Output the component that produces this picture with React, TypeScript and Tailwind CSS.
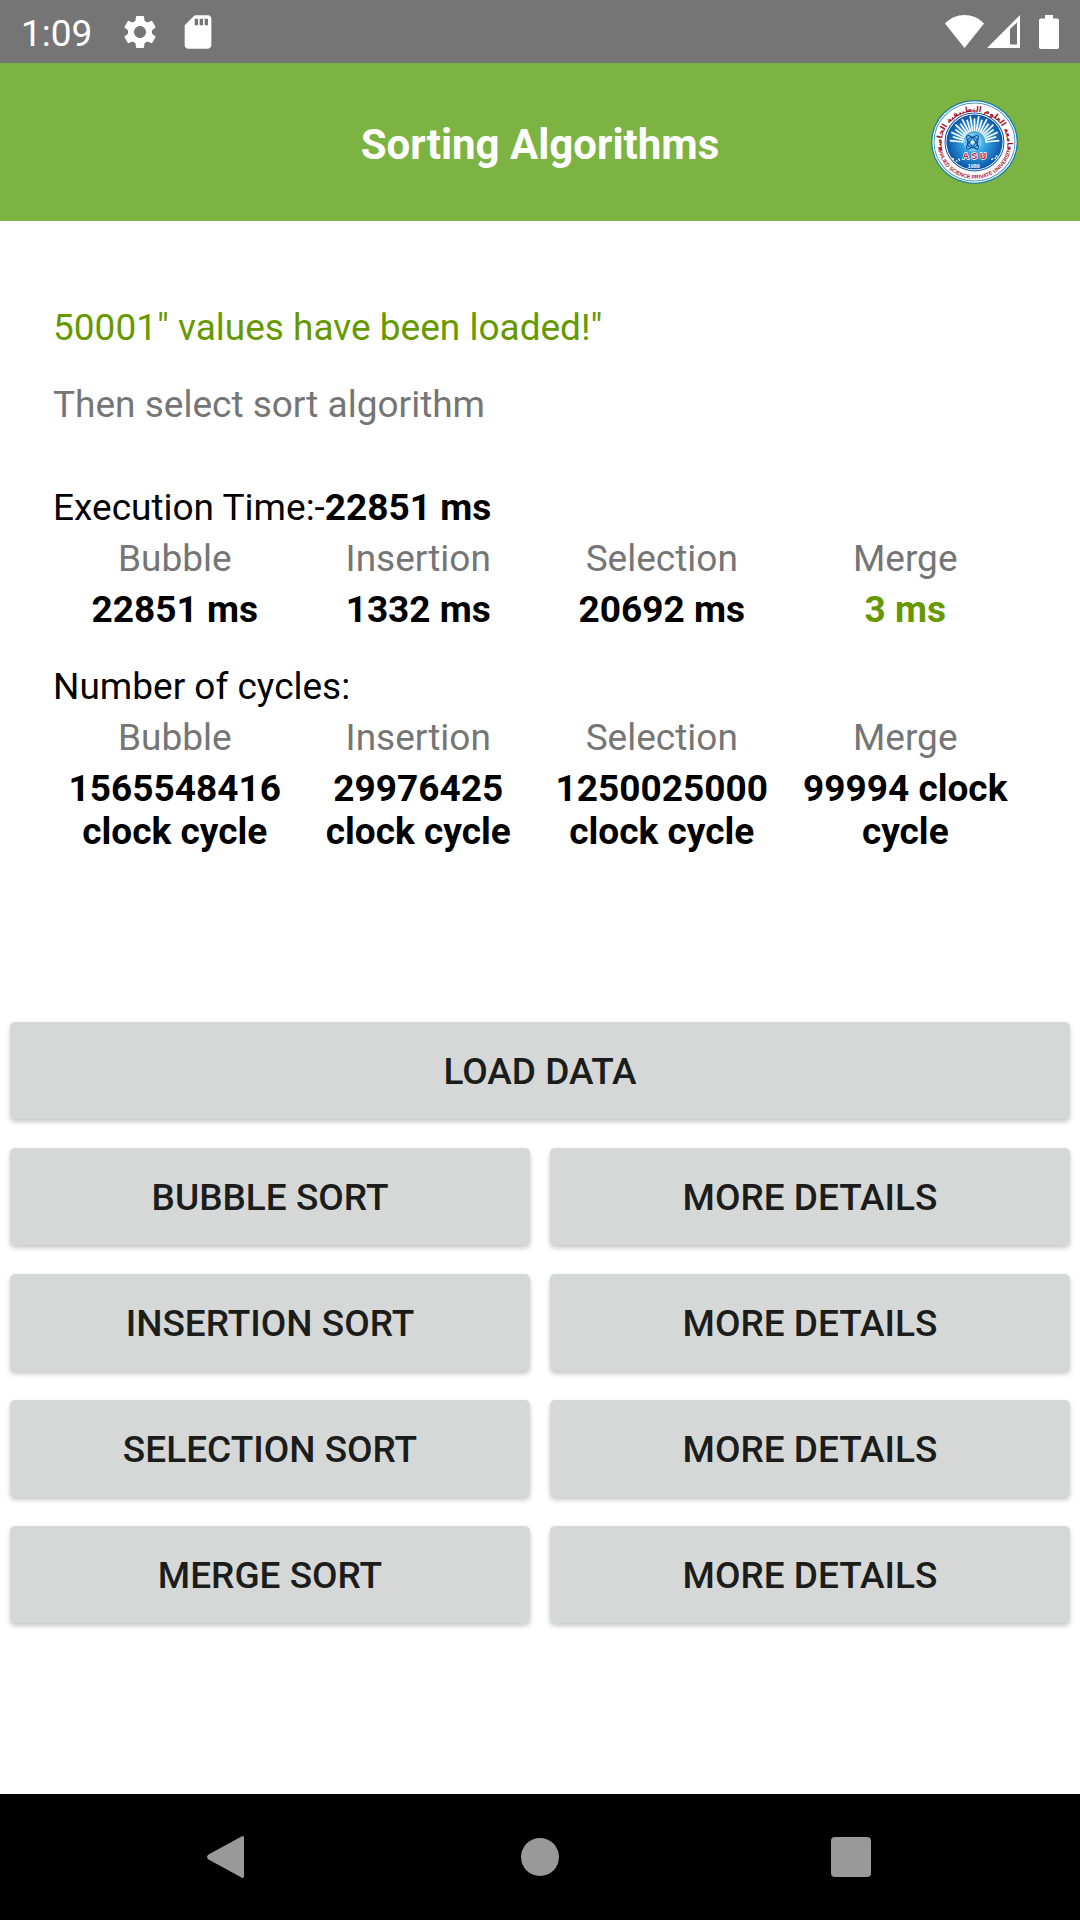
import React from "react";
import { MdSettings, MdSdCard } from "react-icons/md";

const algorithms = ["Bubble", "Insertion", "Selection", "Merge"];
const times = ["22851 ms", "1332 ms", "20692 ms", "3 ms"];
const cycles = [
  "1565548416 clock cycle",
  "29976425 clock cycle",
  "1250025000 clock cycle",
  "99994 clock cycle",
];

function StatusBar() {
  return (
    <div className="flex h-[63px] items-center justify-between bg-[#757575] pr-[21px] pl-[21px] text-white">
      <div className="flex items-center">
        <span className="pt-1">1:09</span>
        <MdSettings size={40} className="ml-7" aria-label="Settings" />
        <MdSdCard size={40} className="ml-[18px]" aria-label="SD card" />
      </div>
      <div className="flex items-center">
        <svg width="39" height="33" viewBox="0 0 39 33" fill="currentColor" aria-label="Wi-Fi">
          <path d="M19.500 33 L0 8.500 C11 -2.800 28 -2.800 39 8.500 Z" />
        </svg>
        <svg width="33" height="33" viewBox="0 0 33 33" fill="currentColor" className="ml-[3px]" aria-label="Signal">
          <path fillRule="evenodd" d="M33 0V33H0Z M23 14V29.500H30V7.500Z" />
        </svg>
        <svg width="20" height="34" viewBox="0 0 20 34" fill="currentColor" className="ml-[19px]" aria-label="Battery">
          <path d="M6 0h8v3.500h4a2 2 0 0 1 2 2V32a2 2 0 0 1-2 2H2a2 2 0 0 1-2-2V5.500a2 2 0 0 1 2-2h4Z" />
        </svg>
      </div>
    </div>
  );
}

// Fan of rays above the atom in the crest
const rays = Array.from({ length: 19 }, (_, i) => {
  const a = Math.PI + (Math.PI * i) / 18;
  const outer = i % 2 ? 66 : 74;
  return {
    x1: 130 + 32 * Math.cos(a),
    y1: 125 + 32 * Math.sin(a),
    x2: 130 + outer * Math.cos(a),
    y2: 121 + outer * Math.sin(a),
  };
});

function Logo() {
  return (
    <svg
      width="87"
      height="84"
      viewBox="0 0 260 250"
      preserveAspectRatio="none"
      role="img"
      aria-label="Applied Science Private University"
    >
      <defs>
        <radialGradient id="disc" cx="50%" cy="50%" r="50%">
          <stop offset="0" stopColor="#8fd3f3" />
          <stop offset="0.45" stopColor="#2f9fdc" />
          <stop offset="1" stopColor="#0a55a8" />
        </radialGradient>
        <path id="arcTop" d="M34 150 A98 96 0 1 1 226 150" />
        <path id="arcBottom" d="M21 105 A111 109 0 1 0 239 105" />
      </defs>
      <ellipse cx="130" cy="125" rx="130" ry="125" fill="#1c7fa8" />
      <ellipse cx="130" cy="125" rx="126" ry="121" fill="#fff" />
      <ellipse cx="130" cy="125" rx="121" ry="116" fill="none" stroke="#4a9cc4" strokeWidth="3" />
      <ellipse cx="130" cy="125" rx="88" ry="86" fill="#fff" stroke="#1a5a9c" strokeWidth="3" />
      <ellipse cx="130" cy="125" rx="84" ry="82" fill="url(#disc)" />
      {rays.map((r, i) => (
        <line key={i} {...r} stroke="#fff" strokeWidth="5" />
      ))}
      <circle cx="124" cy="126" r="27" fill="#7cc8ee" />
      <g fill="none" stroke="#0b4f9c" strokeWidth="3">
        <ellipse cx="124" cy="126" rx="9" ry="25" transform="rotate(40 124 126)" />
        <ellipse cx="124" cy="126" rx="9" ry="25" transform="rotate(-40 124 126)" />
        <circle cx="124" cy="126" r="16" />
      </g>
      <circle cx="124" cy="126" r="4" fill="#fff" />
      <g fontFamily="Liberation Sans, sans-serif" fontWeight="bold" textAnchor="middle">
        <text x="130" y="177" fontSize="27" fill="#c9203a" stroke="#fff" strokeWidth="4" paintOrder="stroke">
          A S U
        </text>
        <text x="128" y="201" fontSize="16" fill="#fff">
          1989
        </text>
        <text fontSize="16" fill="#b01530">
          <textPath href="#arcBottom" startOffset="50%">
            APPLIED SCIENCE PRIVATE UNIVERSITY
          </textPath>
        </text>
        <text fontSize="23" fill="#a01028" fontFamily="DejaVu Sans, sans-serif" direction="rtl">
          <textPath href="#arcTop" startOffset="50%">
            جامعة العلوم التطبيقية الخاصة
          </textPath>
        </text>
      </g>
      <path d="M63 174l6 3M74 181l5 1M82 174l4 7M180 178l6-4M190 174l5-3M194 165l5 4" stroke="#fff" strokeWidth="4" />
    </svg>
  );
}

function Results({ values, label, highlight }: { values: string[]; label: string; highlight?: number }) {
  return (
    <table className="w-full table-fixed text-center" aria-label={label}>
      <thead>
        <tr>
          {algorithms.map((name) => (
            <th key={name} scope="col" className="px-2 py-1 font-normal text-[#757575]">
              {name}
            </th>
          ))}
        </tr>
      </thead>
      <tbody>
        <tr>
          {values.map((value, i) => (
            <td key={value} className={i === highlight ? "px-2 py-1 font-bold text-[#669900]" : "px-2 py-1 font-bold"}>
              {value}
            </td>
          ))}
        </tr>
      </tbody>
    </table>
  );
}

function PadButton({ children, wide }: { children: React.ReactNode; wide?: boolean }) {
  return (
    <button
      type="button"
      className={
        (wide ? "col-span-2 " : "") +
        "h-[97px] rounded-[5px] bg-[#d6d8d7] pt-0.5 font-medium text-[#1b1d1c] uppercase shadow-[0_3px_5px_rgba(0,0,0,0.22)]"
      }
    >
      {children}
    </button>
  );
}

function NavBar() {
  return (
    <nav className="grid h-[126px] grid-cols-3 bg-black px-[71px] text-[#999999]">
      <button type="button" aria-label="Back" className="flex items-center justify-center">
        <svg width="40" height="42" viewBox="0 0 40 42" fill="currentColor">
          <path d="M34.500 0.500 Q37 -1 37 2 V40 Q37 43 34.500 41.500 L1.500 23.500 Q-1.500 21 1.500 18.500 Z" />
        </svg>
      </button>
      <button type="button" aria-label="Home" className="flex items-center justify-center">
        <span className="size-[38px] rounded-full bg-current" />
      </button>
      <button type="button" aria-label="Recent apps" className="flex items-center justify-center pr-1">
        <span className="size-10 rounded bg-current" />
      </button>
    </nav>
  );
}

export default function App() {
  return (
    <div className="flex min-h-screen flex-col bg-white font-['Roboto',sans-serif] text-[37px] leading-[43px] text-black">
      <StatusBar />
      <header className="grid h-[158px] grid-cols-[1fr_auto_1fr] items-center bg-[#7cb342] px-[62px]">
        <h1 className="col-start-2 pt-1 text-[42px] leading-[49px] font-bold text-white">Sorting Algorithms</h1>
        <div className="justify-self-end">
          <Logo />
        </div>
      </header>
      <main className="flex-1">
        <section className="px-[53px] pt-[85px]">
          <p className="text-[#669900]">50001" values have been loaded!"</p>
          <p className="mt-[34px] text-[#757575]">Then select sort algorithm</p>
          <p className="mt-[60px] mb-1">
            Execution Time:-<b className="font-bold">22851 ms</b>
          </p>
          <Results values={times} label="Execution time" highlight={3} />
          <p className="mt-[30px] mb-1">Number of cycles:</p>
          <Results values={cycles} label="Number of cycles" />
        </section>
        <section className="mt-[165px] grid grid-cols-2 gap-x-5 gap-y-[29px] px-[10px]">
          <PadButton wide>Load data</PadButton>
          {algorithms.map((name) => (
            <React.Fragment key={name}>
              <PadButton>{name} sort</PadButton>
              <PadButton>More details</PadButton>
            </React.Fragment>
          ))}
        </section>
      </main>
      <NavBar />
    </div>
  );
}
